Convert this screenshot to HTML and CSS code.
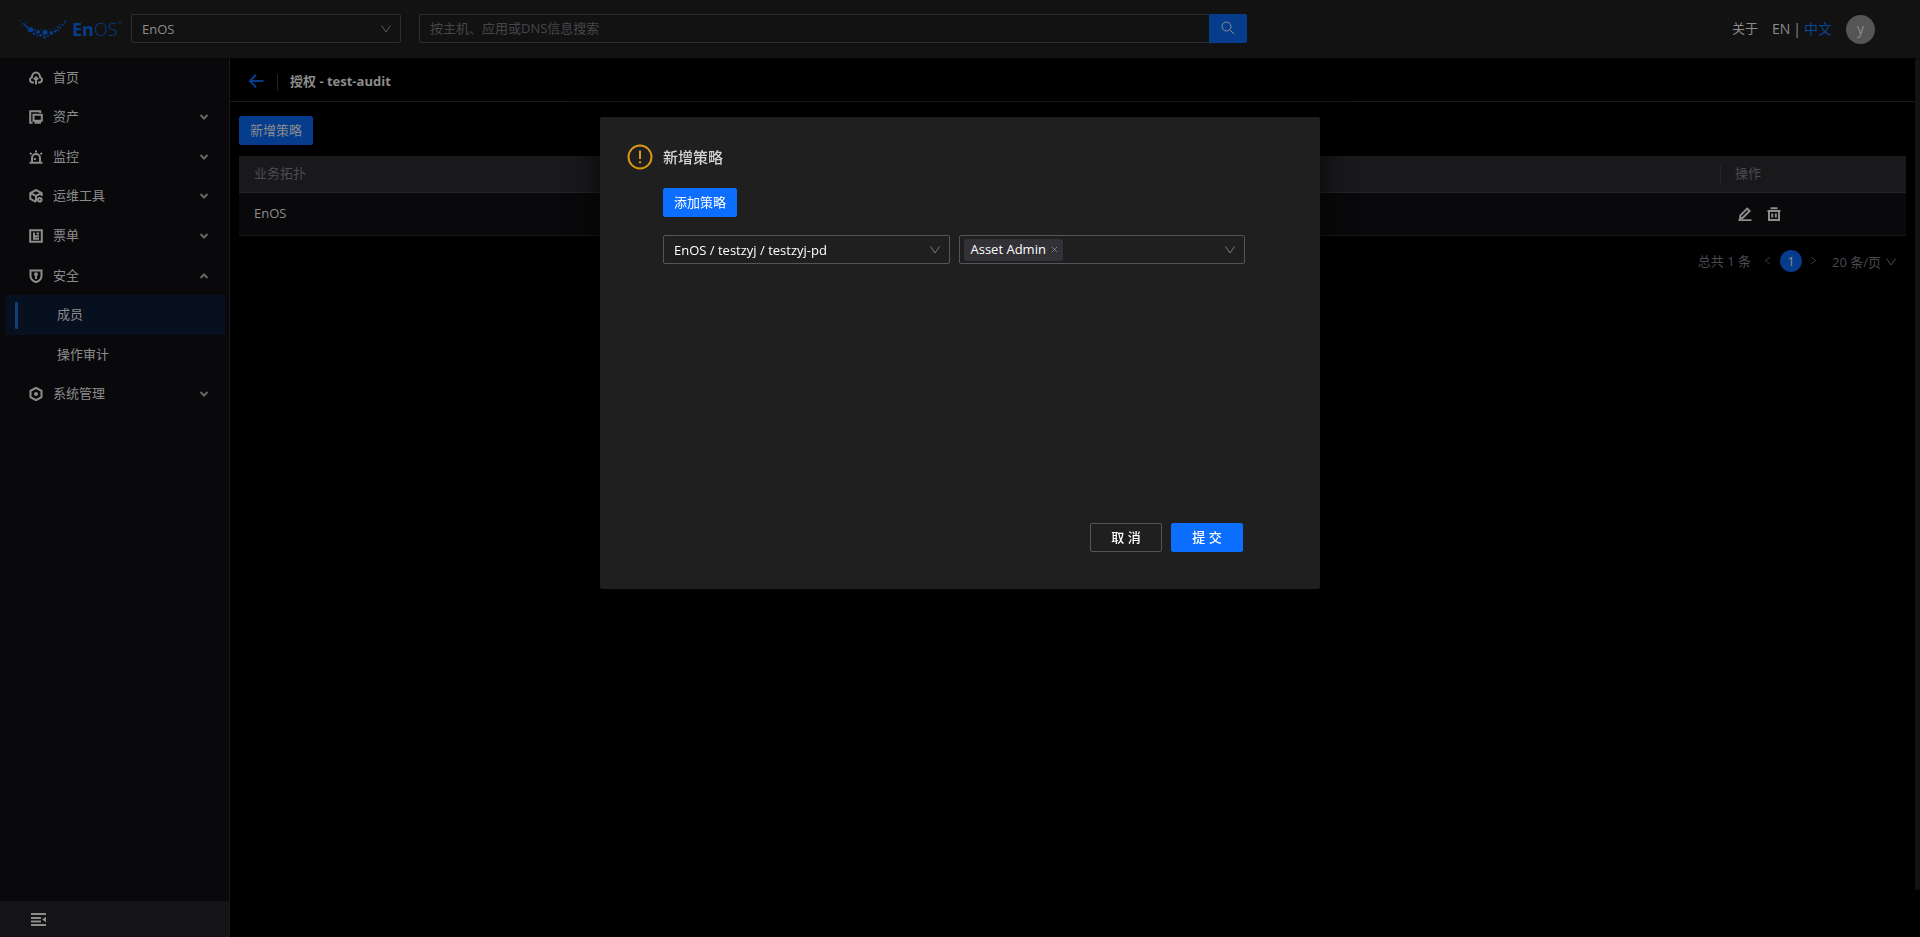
FILE: index.html
```html
<!DOCTYPE html>
<html lang="zh-CN">
<head>
<meta charset="utf-8">
<title>EnOS - 授权</title>
<link rel="stylesheet" href="styles.css">
</head>
<body>
<svg class="sprite" aria-hidden="true">
  <symbol id="chev" viewBox="0 0 12 12"><path d="M1.500 2.500 6 9l4.500-6.500" /></symbol>
  <symbol id="caret" viewBox="0 0 10 10"><path d="m1.500 3 3.500 3.500L8.500 3" /></symbol>
</svg>
<div class="app">
  <header class="topbar">
    <a class="logo" href="#" aria-label="EnOS">
      <svg class="logo-mark" viewBox="14 22 141 60">
        <circle cx="16" cy="28" r="2"/><circle cx="22" cy="36" r="3"/><circle cx="29" cy="41" r="3"/><circle cx="30" cy="34" r="2"/><circle cx="35" cy="46" r="4"/><circle cx="37" cy="55" r="2"/><circle cx="46" cy="54" r="8"/><circle cx="56" cy="66" r="4"/><circle cx="59" cy="55" r="3"/><circle cx="68" cy="61" r="6"/><circle cx="66" cy="72" r="3"/><circle cx="76" cy="71" r="4"/><circle cx="79" cy="53" r="2"/><circle cx="89" cy="62" r="8"/><circle cx="87" cy="77" r="4"/><circle cx="98" cy="73" r="3"/><circle cx="108" cy="64" r="6"/><circle cx="104" cy="53" r="2"/><circle cx="120" cy="59" r="4"/><circle cx="117" cy="50" r="2"/><circle cx="128" cy="55" r="3"/><circle cx="127" cy="46" r="3"/><circle cx="135" cy="48" r="3"/><circle cx="134" cy="39" r="2"/><circle cx="142" cy="40" r="3"/><circle cx="148" cy="32" r="3"/><circle cx="152" cy="26" r="2"/>
      </svg>
      <span class="logo-text"><b>En</b>OS<sup>™</sup></span>
    </a>
    <div class="select org">
      <select aria-label="组织"><option>EnOS</option></select>
      <svg class="chev"><use href="#chev"/></svg>
    </div>
    <form class="search">
      <input type="text" aria-label="搜索" placeholder="按主机、应用或DNS信息搜索">
      <button type="button" aria-label="搜索"><svg viewBox="0 0 14 14"><circle cx="5.500" cy="5.500" r="4.500"/><path d="m8.800 8.800 4.500 4.500"/></svg></button>
    </form>
    <nav class="tools">
      <a class="about" href="#">关于</a>
      <span class="lang"><a href="#">EN</a><i>|</i><a class="on" href="#">中文</a></span>
      <span class="avatar">y</span>
    </nav>
  </header>
  <div class="body">
    <aside class="sidebar">
      <nav class="menu">
        <a href="#"><svg class="ico" viewBox="0 0 14 14"><path d="M5 11.500H3.500a2.600 2.600 0 0 1-.6-5.100C3 3.500 4.800 1.500 7 1.500s4 2 4.100 4.900a2.600 2.600 0 0 1-.6 5.100H9M7 13.500v-7M4.800 8.500 7 6.300l2.200 2.200"/></svg><span>首页</span></a>
        <a href="#"><svg class="ico" viewBox="0 0 14 14"><path d="M3.500 12.700H1.200V1.200h10v1.800M4.500 4.700h8.300v6H4.500zM5.500 12.800h6.500"/></svg><span>资产</span><svg class="caret"><use href="#caret"/></svg></a>
        <a href="#"><svg class="ico" viewBox="0 0 14 14"><path d="M.5 12.700h13M3 12.500V8a4 4 0 0 1 8 0v4.500M7 .5v2M1 3l1.600 1.200M13 3l-1.600 1.200M5.800 10V8"/></svg><span>监控</span><svg class="caret"><use href="#caret"/></svg></a>
        <a href="#"><svg class="ico" viewBox="0 0 14 14"><path d="M7 12.800 1.300 10V4L7 1l5.700 3v3M1.500 4.200 7 7l5.500-2.800M7 7v5.500"/><circle cx="10.800" cy="10.800" r="1.800"/></svg><span>运维工具</span><svg class="caret"><use href="#caret"/></svg></a>
        <a href="#"><svg class="ico" viewBox="0 0 14 14"><path d="M1.200 1.200h11.600v11.600H1.200zM4 4.500h1.500M7.500 4.500H10M4 7.200h6M4 9.800h6M5 4v6"/></svg><span>票单</span><svg class="caret"><use href="#caret"/></svg></a>
        <a href="#"><svg class="ico" viewBox="0 0 14 14"><path d="M1.500 1.500h11V7c0 3-2.500 5-5.500 6.200C4 12 1.500 10 1.500 7zM7 6v4"/><circle cx="7" cy="5.300" r="1"/></svg><span>安全</span><svg class="caret up"><use href="#caret"/></svg></a>
        <a class="sub active" href="#"><span>成员</span></a>
        <a class="sub" href="#"><span>操作审计</span></a>
        <a href="#"><svg class="ico" viewBox="0 0 14 14"><path d="m7 .8 5.500 3.100v6.200L7 13.200 1.500 10.100V3.900z"/><circle cx="7" cy="7" r="1"/></svg><span>系统管理</span><svg class="caret"><use href="#caret"/></svg></a>
      </nav>
      <button class="fold" type="button" aria-label="收起菜单"><svg viewBox="0 0 15 13"><path d="M0 1h15M0 5h10M0 8.500h10M0 12h15"/><path class="solid" d="M15 3.800v5.400L11 6.500z"/></svg></button>
    </aside>
    <main class="content">
      <div class="crumb">
        <a href="#" aria-label="返回"><svg viewBox="0 0 15 14"><path d="M14.500 7H1M7 .8.800 7 7 13.200"/></svg></a>
        <span class="bar"></span>
        <h1>授权 - test-audit</h1>
      </div>
      <div class="panel">
        <button class="btn dim" type="button">新增策略</button>
        <table class="grid">
          <thead><tr><th>业务拓扑</th><th class="ops">操作</th></tr></thead>
          <tbody><tr><td>EnOS</td><td class="ops"><div class="acts">
            <button type="button" aria-label="编辑"><svg viewBox="0 0 14 14"><path d="M.5 13.200h13M2 11.200l.4-2.800 6.800-6.800 2.400 2.400-6.800 6.800z"/></svg></button>
            <button type="button" aria-label="删除"><svg viewBox="0 0 14 14"><path d="M3.500 1.200h7M.5 4h13M2 4v9h10V4M5.200 6.500v4M8.800 6.500v4"/></svg></button>
          </div></td></tr></tbody>
        </table>
        <div class="pager">
          <span>总共 1 条</span>
          <button class="step" type="button" aria-label="上一页"><svg class="prev"><use href="#chev"/></svg></button>
          <button class="page" type="button">1</button>
          <button class="step" type="button" aria-label="下一页"><svg class="next"><use href="#chev"/></svg></button>
          <div class="size"><select aria-label="每页条数"><option>20 条/页</option></select><svg class="chev"><use href="#chev"/></svg></div>
        </div>
      </div>
    </main>
    <div class="track"></div>
  </div>
</div>
<div class="overlay">
  <section class="modal" role="dialog" aria-labelledby="dlg-title">
    <svg class="warn" viewBox="0 0 26 26"><circle cx="13" cy="13" r="11.500"/><path d="M13 6.500v8.500M13 17.300v2"/></svg>
    <div class="modal-main">
      <h2 id="dlg-title">新增策略</h2>
      <button class="btn" type="button">添加策略</button>
      <div class="fields">
        <div class="select">
          <select aria-label="业务拓扑"><option>EnOS / testzyj / testzyj-pd</option></select>
          <svg class="chev"><use href="#chev"/></svg>
        </div>
        <div class="select multi" role="listbox" aria-label="角色">
          <span class="tag"><span>Asset Admin</span><button type="button" aria-label="移除"><svg viewBox="0 0 8 8"><path d="m1 1 6 6M7 1 1 7"/></svg></button></span>
          <svg class="chev"><use href="#chev"/></svg>
        </div>
      </div>
      <div class="foot">
        <button class="btn ghost" type="button">取 消</button>
        <button class="btn" type="button">提 交</button>
      </div>
    </div>
  </section>
</div>
</body>
</html>
```
FILE: styles.css
```css
* { box-sizing: border-box; }
body {
  margin: 0;
  background: #000;
  color: #8c8c8c;
  font: 13px/20px "Open Sans", "Noto Sans CJK SC", sans-serif;
}
a { color: inherit; text-decoration: none; }
button, input, select { font: inherit; color: inherit; margin: 0; }
button { border: 0; padding: 0; background: none; cursor: pointer; }
svg { fill: none; stroke: currentColor; display: block; flex: none; }
.sprite { position: absolute; width: 0; height: 0; }
.app { height: 100vh; display: flex; flex-direction: column; }

.topbar {
  height: 58px; flex: none; background: #121212;
  display: flex; align-items: center; padding: 0 45px 0 20px;
}
.logo { display: flex; align-items: center; width: 111px; color: #063c8c; }
.logo-mark { width: 47px; height: 20px; fill: currentColor; stroke: none; }
.logo-text { margin-left: 5px; font: 300 18px/20px "Open Sans", sans-serif; display: flex; }
.logo-text b { font-weight: 700; }
.logo-text sup { font-size: 6px; line-height: 10px; }

.select { position: relative; height: 29px; border: 1px solid #2d2d33; border-radius: 2px; display: flex; align-items: center; }
.select select, .size select {
  appearance: none; width: 100%; height: 100%; padding: 0 30px 0 10px;
  border: 0; background: none; outline: 0;
}
.chev { width: 12px; height: 12px; }
.select .chev { position: absolute; right: 8px; color: #5c5c63; pointer-events: none; }
.org { width: 270px; margin: -1px 18px 0 0; }

.search { display: flex; height: 29px; width: 828px; margin-top: -1px; }
.search input {
  flex: 1; min-width: 0; padding: 0 10px 2px; background: none; outline: 0;
  border: 1px solid #2d2d33; border-right: 0; border-radius: 2px 0 0 2px;
}
.search input::placeholder { color: #46464a; }
.search button { width: 38px; background: #063c8c; border-radius: 0 2px 2px 0; display: grid; place-items: center; }
.search svg { width: 14px; height: 14px; margin-bottom: 2px; }

.tools { margin-left: auto; display: flex; align-items: center; }
.about { margin: 0 14px 2px 0; }
.lang { display: flex; font-size: 14px; margin-right: 14px; }
.lang i { font-style: normal; margin: 0 3px; }
.lang .on { color: #0a4593; }
.avatar { width: 29px; height: 29px; border-radius: 50%; background: #555; text-align: center; line-height: 28px; font-size: 14px; }

.body { flex: 1; min-height: 0; display: flex; }
.sidebar { width: 230px; flex: none; background: #09090b; border-right: 1px solid #19191c; display: flex; flex-direction: column; }
.menu { display: grid; height: 356px; grid-auto-rows: 1fr; }
.menu a { display: flex; align-items: center; padding: 0 20px 0 29px; }
.menu span { padding-bottom: 2px; }
.ico { width: 14px; height: 14px; margin-right: 10px; stroke-width: 2; }
.caret { width: 10px; height: 10px; margin-left: auto; stroke-width: 2; color: #666; }
.up { transform: rotate(180deg); }
.menu .sub { margin: 0 4px 0 5px; padding-left: 52px; }
.menu .active { background: #07101f; position: relative; }
.active::before { content: ""; position: absolute; left: 10px; top: 7px; bottom: 6px; width: 3px; border-radius: 1px; background: #0b4177; }
.fold { margin-top: auto; height: 36px; background: #141417; padding-left: 31px; }
.fold svg { width: 15px; height: 13px; stroke-width: 2; }
.solid { fill: currentColor; stroke: none; }

.content { flex: 1; min-width: 0; }
.crumb { height: 44px; border-bottom: 1px solid #19191a; display: flex; align-items: center; padding: 3px 0 0 19px; }
.crumb a { color: #063c8c; }
.crumb svg { width: 15px; height: 14px; stroke-width: 2; }
.bar { width: 1px; height: 17px; background: #242424; margin: 2px 12px 0 13px; }
h1 { margin: 0; font-size: 13px; font-weight: 700; }
.panel { padding: 14px 9px 0; }
.btn {
  height: 29px; min-width: 72px; padding: 0 10px 2px; display: block;
  background: #0b6eff; color: #fff; border: 1px solid #0b6eff; border-radius: 2px; line-height: 24px;
}
.btn.dim { background: #063c8c; border-color: #063c8c; color: #8c8c8c; }
.btn.ghost { background: none; border-color: #54545c; }
.foot .btn { font-weight: 500; }

.grid { width: 100%; margin-top: 11px; border-collapse: separate; border-spacing: 0; text-align: left; }
.grid th { height: 37px; padding: 0 15px 3px; background: #19191c; border-bottom: 1px solid #242428; color: #4b4b50; font-weight: 400; }
.grid td { height: 43px; padding: 0 15px 2px; background: #09090b; border-bottom: 1px solid #19191c; }
.grid .ops { width: 186px; }
.grid th.ops { background: linear-gradient(#232327, #232327) 0 8px / 1px 20px no-repeat #19191c; }
.acts { display: flex; gap: 15px; padding: 2px 0 0 3px; }
.acts svg { width: 14px; height: 14px; stroke-width: 2; }

.pager { display: flex; align-items: center; justify-content: flex-end; margin-top: 13px; color: #4b4b50; padding-right: 9px; }
.step { margin: 0 8px 0 12px; }
.step svg { width: 9px; height: 9px; }
.prev { transform: rotate(90deg); }
.next { transform: rotate(-90deg); }
.page { width: 22px; height: 22px; border-radius: 50%; background: #063c8c; color: #8c8c8c; line-height: 20px; }
.page + .step { margin: 0 14px 0 7px; }
.size { display: flex; align-items: center; gap: 3px; padding-top: 3px; }
.size select { padding: 0; }
.track { width: 5px; margin-bottom: 47px; background: #121212; border-radius: 3px; }

.overlay { position: fixed; inset: 0; display: flex; justify-content: center; align-items: flex-start; padding-top: 117px; }
.modal {
  width: 720px; max-width: 100%; background: #1f1f1f; color: #fff; border-radius: 2px;
  padding: 27px 75px 37px 27px; display: flex; box-shadow: 0 4px 32px rgba(0, 0, 0, .8);
}
.warn { width: 26px; height: 26px; margin: 0 10px 0 0; color: #d89614; stroke-width: 2; }
.modal-main { flex: 1; min-width: 0; }
h2 { margin: 0 0 18px; font-size: 15px; line-height: 26px; font-weight: 500; color: #d4d4d4; }
.fields { display: grid; grid-template-columns: 1fr 1fr; gap: 9px; margin: 18px 0 259px; }
.modal .select { border-color: #54545c; }
.modal .select .chev { color: #7a7a82; }
.modal .select select { padding-top: 1px; font-weight: 500; }
.multi { padding-left: 4px; }
.tag { display: flex; align-items: center; gap: 5px; height: 22px; padding: 0 5px 0 7px; background: #313136; border-radius: 2px; font-weight: 500; }
.tag span { padding-bottom: 2px; }
.tag svg { width: 7px; height: 7px; color: #85858c; }
.foot { display: flex; justify-content: flex-end; gap: 9px; padding-right: 2px; }
```
